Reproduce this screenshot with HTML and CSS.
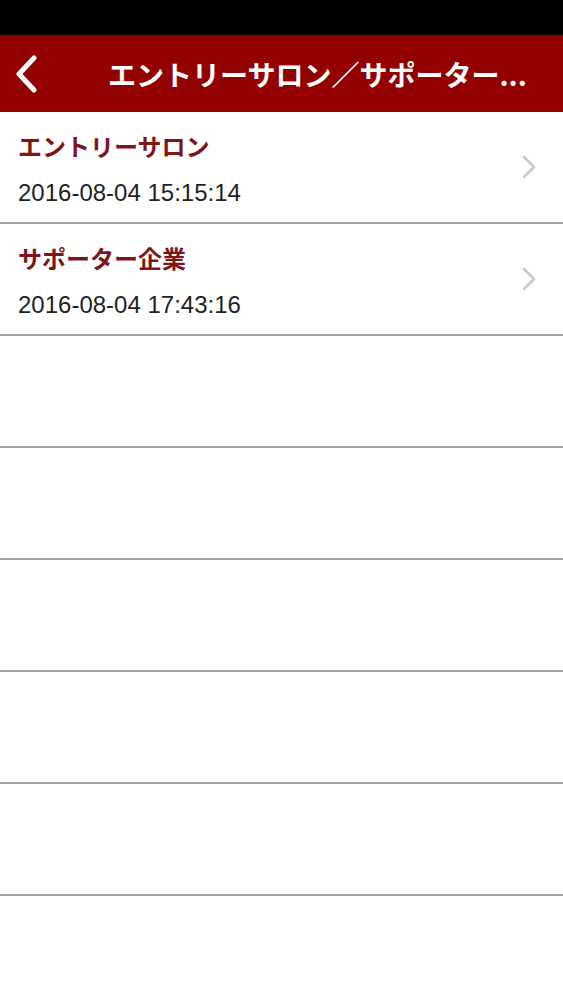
FILE: index.html
```html
<!DOCTYPE html>
<html lang="ja">
<head>
<meta charset="utf-8">
<link rel="stylesheet" href="styles.css">
</head>
<body>
<div class="status"></div>
<header class="nav">
  <svg class="back" width="26" height="38" viewBox="0 0 26 38"><path d="M21 3 L6 19 L21 35" fill="none" stroke="#fff" stroke-width="5" stroke-linecap="round" stroke-linejoin="round"/></svg>
  <div class="nav-title">エントリーサロン／サポーター...</div>
</header>
<ul class="list">
  <li class="row">
    <div class="texts">
      <div class="title">エントリーサロン</div>
      <div class="date">2016-08-04 15:15:14</div>
    </div>
    <svg class="chev" width="16" height="24" viewBox="0 0 16 24"><path d="M3 2 L13 12 L3 22" fill="none" stroke="#c8c8cc" stroke-width="2.5" stroke-linecap="round" stroke-linejoin="round"/></svg>
  </li>
  <li class="row">
    <div class="texts">
      <div class="title">サポーター企業</div>
      <div class="date">2016-08-04 17:43:16</div>
    </div>
    <svg class="chev" width="16" height="24" viewBox="0 0 16 24"><path d="M3 2 L13 12 L3 22" fill="none" stroke="#c8c8cc" stroke-width="2.5" stroke-linecap="round" stroke-linejoin="round"/></svg>
  </li>
  <li class="row empty"></li>
  <li class="row empty"></li>
  <li class="row empty"></li>
  <li class="row empty"></li>
  <li class="row empty"></li>
</ul>
</body>
</html>
```
FILE: styles.css
```css
html, body {
  margin: 0;
  padding: 0;
  background: #fff;
}
body {
  font-family: "Liberation Sans", "Noto Sans CJK JP", sans-serif;
}
.status {
  height: 35px;
  background: #000;
}
.nav {
  height: 77px;
  background: #920000;
  display: flex;
  align-items: center;
  box-sizing: border-box;
  padding-left: 13px;
}
.back {
  display: block;
  flex: none;
}
.nav-title {
  margin-left: 69px;
  color: #fff;
  font-family: "Noto Sans CJK JP", sans-serif;
  font-weight: 700;
  font-size: 28px;
  line-height: 34px;
  white-space: nowrap;
}
.list {
  list-style: none;
  margin: 0;
  padding: 0;
}
.row {
  height: 110px;
  border-bottom: 2px solid #a3a3a3;
  display: flex;
  align-items: center;
  padding: 0 26px 0 18px;
}
.texts {
  flex: 1;
  align-self: flex-start;
  display: flex;
  flex-direction: column;
  gap: 17px;
  padding-top: 19px;
}
.title {
  font-family: "Noto Sans CJK JP", sans-serif;
  font-weight: 700;
  font-size: 24px;
  line-height: 30px;
  color: #7e1517;
}
.date {
  font-family: "Liberation Sans", sans-serif;
  font-size: 24px;
  line-height: 30px;
  color: #222;
}
.chev {
  display: block;
  flex: none;
}
```
